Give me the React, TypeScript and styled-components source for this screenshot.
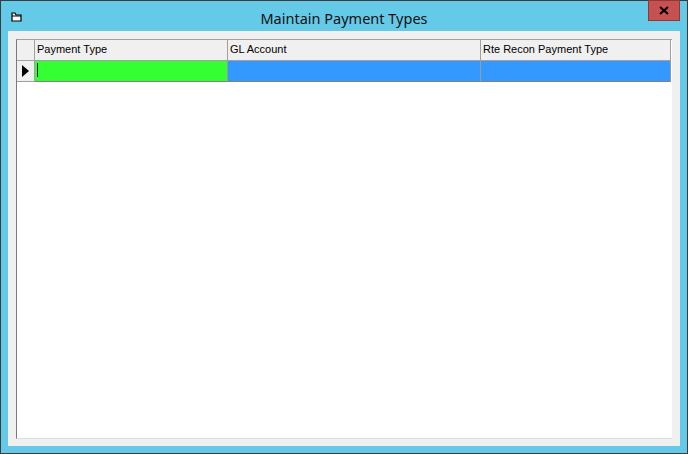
import React from "react";
import styled, { createGlobalStyle } from "styled-components";

const Global = createGlobalStyle`
  html, body { margin: 0; padding: 0; }
  body { width: 688px; height: 454px; overflow: hidden; font-family: "Liberation Sans", Arial, sans-serif; }
`;

const Win = styled.div`
  box-sizing: border-box; width: 688px; height: 454px;
  background: #65c9e8; border: 1px solid #3c3c3c;
  display: flex; flex-direction: column;
`;
const TitleBar = styled.div`
  height: 30px; display: flex; align-items: flex-start; position: relative;
`;
const Icon = styled.div` width: 16px; height: 16px; margin: 8px 0 0 10px; `;
const Title = styled.div`
  position: absolute; left: 0; right: 0; top: 7px; text-align: center;
  font-family: "Segoe UI", "Noto Sans", sans-serif; font-size: 14.5px; color: #111;
`;
const Close = styled.div`
  position: absolute; right: 7px; top: -1px; width: 32px; height: 21px;
  background: #c75050; border: 1px solid #8a3a3a; box-sizing: border-box;
  display: flex; align-items: center; justify-content: center;
`;
const Client = styled.div`
  flex: 1; margin: 0 7px 7px 7px; background: #f0f0f0; padding: 8px 8px 7px 8px; display: flex;
`;
const Grid = styled.div`
  flex: 1; background: #fff; border-left: 1px solid #7a7a7a; border-top: 1px solid #a0a0a0;
  border-bottom: 1px solid #dcdcdc; display: flex; flex-direction: column;
`;
const Row = styled.div`
  display: grid; grid-template-columns: 18px 193px 253px 190px; height: 21px;
`;
const Cell = styled.div<{ $bg: string; $hdr?: boolean }>`
  box-sizing: border-box; background: ${p => p.$bg};
  border-right: 1px solid ${p => (p.$hdr ? "#a0a0a0" : "#9a9a9a")};
  border-bottom: 1px solid ${p => (p.$hdr ? "#a0a0a0" : "#808080")};
  font-size: 11px; color: #000; padding: 3px 0 0 2px; white-space: nowrap; overflow: hidden;
  display: flex; align-items: flex-start;
`;
const Caret = styled.div` width: 1px; height: 14px; background: #000; margin-left: 1px; `;

export default function App() {
  return (
    <>
      <Global />
      <Win>
        <TitleBar>
          <Icon>
            <svg width="12" height="11" viewBox="0 0 12 11">
              <path d="M1 2 L1 9 L10 9 L10 3 L5 3 L4 1 L1 1 Z" fill="#fff" stroke="#000" strokeWidth="1.2" />
              <path d="M1 4 L10 4" stroke="#000" />
            </svg>
          </Icon>
          <Title>Maintain Payment Types</Title>
          <Close>
            <svg width="10" height="9" viewBox="0 0 10 9">
              <path d="M1 1 L9 8 M9 1 L1 8" stroke="#000" strokeWidth="2" />
            </svg>
          </Close>
        </TitleBar>
        <Client>
          <Grid>
            <Row>
              <Cell $bg="#f0f0f0" $hdr />
              <Cell $bg="#f0f0f0" $hdr>Payment Type</Cell>
              <Cell $bg="#f0f0f0" $hdr>GL Account</Cell>
              <Cell $bg="#f0f0f0" $hdr>Rte Recon Payment Type</Cell>
            </Row>
            <Row>
              <Cell $bg="#f0f0f0" $hdr style={{ padding: "4px 0 0 5px" }}>
                <svg width="7" height="12" viewBox="0 0 7 12"><path d="M0 0 L7 6 L0 12 Z" fill="#000" /></svg>
              </Cell>
              <Cell $bg="#33ff33" style={{ padding: "2px 0 0 1px" }}><Caret /></Cell>
              <Cell $bg="#3399ff" />
              <Cell $bg="#3399ff" />
            </Row>
          </Grid>
        </Client>
      </Win>
    </>
  );
}
